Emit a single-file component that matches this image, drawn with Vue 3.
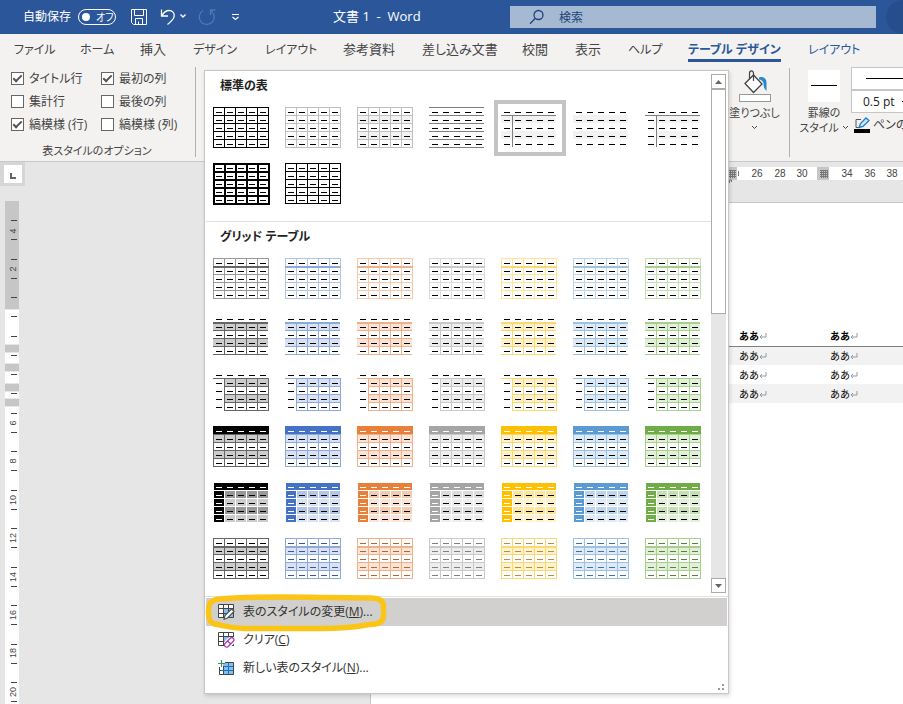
<script setup>
import { ref } from 'vue'

const tabs = ['ファイル', 'ホーム', '挿入', 'デザイン', 'レイアウト', '参考資料', '差し込み文書', '校閲', '表示', 'ヘルプ', 'テーブル デザイン', 'レイアウト']
const activeTab = 10
const isKana = t => /^[\u30a0-\u30ff ]+$/.test(t)

const options = ref([
  { id: 'opt-header', label: 'タイトル行', on: true },
  { id: 'opt-first', label: '最初の列', on: true },
  { id: 'opt-total', label: '集計行', on: false },
  { id: 'opt-last', label: '最後の列', on: false },
  { id: 'opt-rows', label: '縞模様 (行)', on: true },
  { id: 'opt-cols', label: '縞模様 (列)', on: false }
])

/* Thumbnail geometry: five 11px columns by five 8px rows */
const CW = 11
const RH = 8
const box = (x, y, w, h, fill) => ({ x, y, w, h, fill })
const hl = (y, fill, x = 0, w = 56, t = 1) => box(x, y, w, t, fill)
const vl = (x, fill, y = 0, h = 41, t = 1) => box(x, y, t, h, fill)
const range = (a, b) => Array.from({ length: b - a + 1 }, (_, i) => a + i)

function grid(color, t = 1) {
  return [
    ...range(0, 5).map(i => hl(i * RH, color, 0, 55 + t, t)),
    ...range(0, 5).map(i => vl(i * CW, color, 0, 40 + t, t))
  ]
}
function bands(color, x = 0, w = 55) {
  return [box(x, 8, w, 8, color), box(x, 24, w, 8, color)]
}
function dashes(color, pick = () => color) {
  const out = []
  for (let r = 0; r < 5; r++) for (let c = 0; c < 5; c++) out.push(box(c * CW + 3, r * RH + 5, 6, 1, pick(r, c)))
  return out
}

const K = '#000000'
const G = '#bfbfbf'
const M = '#7f7f7f'
const B = '#f2f2f2'
const plain = [
  [...grid(K), ...dashes(K)],
  [...grid(G), ...dashes(K)],
  [...bands(B), ...grid(G), ...dashes(K)],
  [...range(0, 5).map(i => hl(i * RH, M, 0, 55)), ...dashes(K)],
  [...bands(B), hl(8, M, 0, 55), vl(11, M, 8, 32), ...dashes(K)],
  [...bands(B), ...dashes(K)],
  [...bands(B, 11, 44), hl(8, M, 0, 55), vl(11, M, 8, 32), ...dashes(K)],
  [...grid(K, 2), ...dashes(K)],
  [...grid(K), ...dashes(K)]
]

const palette = [
  { light: '#999999', mid: '#666666', band: '#cccccc', deep: '#999999', solid: '#000000', ink: '#000000' },
  { light: '#b4c6e7', mid: '#8eaadb', band: '#d9e2f3', deep: '#b4c6e7', solid: '#4472c4', ink: '#3f5590' },
  { light: '#f7caac', mid: '#f0b08a', band: '#fbe4d5', deep: '#f4cbae', solid: '#e8803a', ink: '#a9693a' },
  { light: '#dbdbdb', mid: '#c9c9c9', band: '#ededed', deep: '#dbdbdb', solid: '#a5a5a5', ink: '#7f7f7f' },
  { light: '#ffe599', mid: '#fad873', band: '#fff2cc', deep: '#ffe599', solid: '#ffc000', ink: '#b2913a' },
  { light: '#bdd6ee', mid: '#9cc2e5', band: '#deeaf6', deep: '#bdd6ee', solid: '#5b9bd5', ink: '#41719c' },
  { light: '#c5e0b3', mid: '#a8d08d', band: '#e2efd9', deep: '#c5e0b3', solid: '#70ad47', ink: '#5d7d45' }
]

const recipes = [
  c => [...grid(c.light), hl(8, c.mid, 0, 56, 2), ...dashes(K)],
  c => [
    ...bands(c.band), hl(8, c.mid, 0, 55, 2),
    ...range(2, 5).map(i => hl(i * RH, c.mid, 0, 55)),
    ...range(1, 4).map(i => vl(i * CW, c.mid, 8, 33)), ...dashes(K)
  ],
  c => [
    ...bands(c.band, 11, 44), hl(8, c.mid),
    ...range(2, 5).map(i => hl(i * RH, c.mid, 11, 45)),
    ...range(1, 5).map(i => vl(i * CW, c.mid, 8, 33)), ...dashes(K)
  ],
  c => [
    ...bands(c.band), ...grid(c.mid), box(0, 0, 56, 8, c.solid),
    ...dashes(K, r => (r === 0 ? '#ffffff' : K))
  ],
  c => {
    const out = [box(1, 1, 54, 7, c.solid)]
    for (let r = 1; r < 5; r++) {
      for (let k = 0; k < 5; k++) {
        out.push(box(k * CW + 1, r * RH + 1, 10, 7, k === 0 ? c.solid : r % 2 ? c.deep : c.band))
      }
    }
    return [...out, ...dashes(K, (r, k) => (r === 0 || k === 0 ? '#ffffff' : K))]
  },
  c => [...bands(c.band), ...grid(c.mid), hl(8, c.mid, 0, 56, 2), ...dashes(c.ink)]
]
const grids = recipes.flatMap(make => palette.map(make))

const sections = [
  { title: '標準の表', items: plain, selected: 4 },
  { title: 'グリッド テーブル', items: grids, selected: -1 }
]

const commands = [
  { icon: 'edit', label: '表のスタイルの変更', key: 'M', tail: ')...', hot: true },
  { icon: 'clear', label: 'クリア', key: 'C', tail: ')', hot: false },
  { icon: 'add', label: '新しい表のスタイル', key: 'N', tail: ')...', hot: false }
]

const rulerBlocks = [
  [0, 108, '#c6c6c6'], [109, 34, '#fff'], [144, 7, '#c6c6c6'], [152, 10, '#fff'], [163, 7, '#c6c6c6'],
  [171, 11, '#fff'], [183, 7, '#c6c6c6'], [191, 6, '#fff'], [198, 7, '#c6c6c6'], [206, 1200, '#fff']
]
const rulerTicks = range(0, 60).map(i => Math.round(19 + i * 19.25))
const rulerNumbers = [[4, 30], [2, 68], ...range(3, 10).map(i => [i * 2, Math.round(222 + (i - 3) * 38.4)])]
const topNumbers = [26, 28, 30, 34, 36, 38].map(n => [n, Math.round(387 + (n - 26) * 11.25)])
const docRows = ['ああ', 'ああ', 'ああ']
</script>

<template>
  <div class="app">
    <header class="titlebar">
      <div class="quick">
        <span id="autosave">自動保存</span>
        <button class="toggle" role="switch" aria-checked="false" aria-labelledby="autosave"><i class="knob"></i>オフ</button>
        <button class="tool save" aria-label="上書き保存">
          <svg width="18" height="18" viewBox="0 0 18 18" fill="none" stroke="#fff">
            <path d="M1.500 1.500h15v15H3.500l-2-2zM4.500 1.500v6h9v-6M5.500 16.500v-6h7v6M8.500 16.500v-3" />
          </svg>
        </button>
        <button class="tool" aria-label="元に戻す">
          <svg width="26" height="18" viewBox="0 0 26 18" fill="none" stroke="#fff" stroke-width="1.300">
            <path d="M1.500 1.500v6.500h6.500M2 7.500C4 4 6 2.500 9 2.500c3.500 0 5.500 2.500 5.200 5.500C14 11 10 14.500 7.500 16.500" />
            <path d="M20.500 6.500l2.500 2.500 2.500-2.500" />
          </svg>
        </button>
        <button class="tool redo" aria-label="繰り返し">
          <svg width="18" height="18" viewBox="0 0 18 18" fill="none" stroke="#5079b3" stroke-width="1.300">
            <path d="M5 2.500A7.500 7.500 0 1 0 12.500 2.500M12.500 7V2h5" />
          </svg>
        </button>
        <button class="tool" aria-label="ツールバーのカスタマイズ">
          <svg width="9" height="8" viewBox="0 0 9 8" fill="none" stroke="#fff" stroke-width="1.200"><path d="M1 1.500h7M1.500 4l3 2.500 3-2.500" /></svg>
        </button>
      </div>
      <div class="doc-title">文書 1&nbsp; -&nbsp; Word</div>
      <label class="search">
        <svg width="16" height="16" viewBox="0 0 16 16" fill="none" stroke="#1f4379" stroke-width="1.300"><circle cx="9.500" cy="6" r="4.500" /><path d="M6.300 9.300L1 14.700" /></svg>
        <input type="text" placeholder="検索" aria-label="検索" />
      </label>
      <div class="account"><i class="avatar"></i></div>
    </header>

    <nav class="tabs">
      <a v-for="(t, i) in tabs" :key="i" href="#" :class="{ active: i === activeTab, context: i > 9, kana: isKana(t) }">{{ t }}</a>
    </nav>

    <section class="ribbon">
      <div class="group options">
        <div class="checks">
          <label v-for="o in options" :key="o.id" :for="o.id"><input :id="o.id" v-model="o.on" type="checkbox" />{{ o.label }}</label>
        </div>
        <div class="caption">表スタイルのオプション</div>
      </div>
      <div class="ribbon-tail">
        <button class="big shading">
          <svg width="32" height="32" viewBox="0 0 32 32" fill="none">
            <path d="M6 13.500L14.500 5l8.500 9-8.500 8.500z" fill="#fff" stroke="#444" stroke-width="1.300" />
            <path d="M14.500 11V3.500c0-3.500-4-3.500-4 0v5.500" stroke="#444" stroke-width="1.200" />
            <path d="M20 7.500c4-1.500 7.500 1 7.500 5V21c-2.500-2-3-5-3-8-1-2-2.500-3.500-4.500-3.500z" fill="#2b88c8" />
            <rect x=".5" y="24.500" width="31" height="7" fill="#fff" stroke="#999" />
          </svg>
          <span>塗りつぶし</span>
          <svg class="chev" width="7" height="5" viewBox="0 0 7 5" fill="none" stroke="#444"><path d="M1 1l2.500 2.500L6 1" /></svg>
        </button>
        <button class="big border-style">
          <svg width="32" height="32" viewBox="0 0 32 32"><rect width="32" height="32" fill="#fff" /><rect x="3" y="15" width="26" height="1" fill="#000" /></svg>
          <span>罫線の</span>
          <span class="with-chev">スタイル<svg width="7" height="5" viewBox="0 0 7 5" fill="none" stroke="#444"><path d="M1 1l2.500 2.500L6 1" /></svg></span>
        </button>
        <div class="pen">
          <button class="field" aria-label="ペンのスタイル"><i class="stroke"></i></button>
          <div class="field">
            <select aria-label="ペンの太さ"><option>0.5 pt</option></select>
            <i class="stroke"></i>
          </div>
          <button class="pen-color">
            <svg width="17" height="17" viewBox="0 0 17 17" fill="none">
              <path d="M7 2.500H2v8h3" stroke="#555" />
              <path d="M5 10.500l1.500-4L12 1l3 2.500-6 6z" fill="#cfe6f7" stroke="#1f7fc9" stroke-width="1.300" />
              <rect x="0" y="12" width="16" height="4" fill="#000" />
            </svg>
            ペンの色
          </button>
        </div>
      </div>
    </section>

    <main class="workspace">
      <aside class="side">
        <button class="tab-stop" aria-label="左揃えタブ"><svg width="17" height="17" viewBox="0 0 17 17"><path d="M5 7h2v4h4v2H5z" fill="#666" /></svg></button>
        <svg class="ruler-v" width="14" height="100%">
          <rect v-for="(b, i) in rulerBlocks" :key="'b' + i" x="0" :y="b[0]" width="14" :height="b[1]" :fill="b[2]" />
          <rect v-for="y in rulerTicks" :key="'t' + y" x="6" :y="y" width="6" height="1" fill="#444" />
          <text v-for="n in rulerNumbers" :key="'n' + n[1]" :transform="`translate(11 ${n[1]}) rotate(-90)`" text-anchor="middle" font-size="9" fill="#444">{{ n[0] }}</text>
        </svg>
      </aside>
      <div class="canvas">
        <svg class="ruler-h" width="100%" height="16">
          <rect x="0" y="0" width="100%" height="13" fill="#fff" />
          <text v-for="n in topNumbers" :key="n[0]" :x="n[1]" y="10" text-anchor="middle" font-size="10" fill="#444">{{ n[0] }}</text>
          <rect x="357" y="0" width="10" height="13" fill="#c6c6c6" />
          <path d="M359 3.500h7M359 5.500h7M359 7.500h7M359 9.500h7M360.500 3v8M362.500 3v8M364.500 3v8M368.500 4v5" stroke="#777" />
          <rect x="447" y="0" width="12" height="13" fill="#c6c6c6" />
          <path d="M450 3.500h8M450 5.500h8M450 7.500h8M450 9.500h8M451.500 3v8M453.500 3v8M455.500 3v8M457.500 3v8" stroke="#777" />
          <path d="M359.500 16v-3h2v2" stroke="#777" fill="none" />
        </svg>
        <article class="page">
          <table class="doc-table">
            <thead>
              <tr>
                <th v-for="c in 2" :key="c">ああ<svg width="8" height="7" viewBox="0 0 8 7" fill="none" stroke="#999"><path d="M7 0v4H1M3 2L1 4l2 2" /></svg></th>
              </tr>
            </thead>
            <tbody>
              <tr v-for="(r, i) in docRows" :key="i">
                <td v-for="c in 2" :key="c">{{ r }}<svg width="8" height="7" viewBox="0 0 8 7" fill="none" stroke="#999"><path d="M7 0v4H1M3 2L1 4l2 2" /></svg></td>
              </tr>
            </tbody>
          </table>
        </article>
      </div>
    </main>

    <div class="popup">
      <div class="gallery">
        <div class="gallery-body">
          <section v-for="s in sections" :key="s.title" class="gallery-section">
            <h3>{{ s.title }}</h3>
            <div class="thumbs">
              <button v-for="(it, i) in s.items" :key="i" class="thumb" :class="{ selected: i === s.selected }" :aria-label="s.title + ' ' + (i + 1)">
                <svg width="58" height="42" viewBox="0 0 58 42" shape-rendering="crispEdges">
                  <rect v-for="(q, k) in it" :key="k" :x="q.x" :y="q.y" :width="q.w" :height="q.h" :fill="q.fill" />
                </svg>
              </button>
            </div>
          </section>
        </div>
        <div class="scrollbar">
          <button aria-label="上へ"><svg width="7" height="4" viewBox="0 0 7 4"><path d="M0 4L3.500 0 7 4z" fill="#666" /></svg></button>
          <div class="track"><div class="grip"></div></div>
          <button aria-label="下へ"><svg width="7" height="4" viewBox="0 0 7 4"><path d="M0 0L3.500 4 7 0z" fill="#666" /></svg></button>
        </div>
      </div>
      <div class="commands">
        <button v-for="c in commands" :key="c.key" class="command" :class="{ hot: c.hot }">
          <svg width="17" height="16" viewBox="0 0 17 16" fill="none">
            <template v-if="c.icon === 'add'">
              <rect x="5" y="3" width="11" height="12" fill="#83beec" />
              <path d="M7 2.500h8.500v12H1.500V7M5.500 6v8.500" stroke="#444" />
              <path d="M1.500 10.500h14M6 6.500h9.500M10.500 3v11.500" stroke="#1e6fb8" />
              <path d="M3.500 0v7M0 3.500h7" stroke="#3f8f5f" stroke-width="1.200" />
            </template>
            <template v-else>
              <rect x="1" y="1" width="15" height="13" fill="#fff" />
              <rect x="6" y="5" width="10" height="9" fill="#83beec" />
              <path d="M.5.5h15v13H.5zM.5 4.500h15M.5 9.500h15M5.500.5v13M10.500.5v13" stroke="#444" />
              <path v-if="c.icon === 'edit'" d="M6 15.300l1-3.800L13.500 5l2.500 2.300-6.500 6.700z" fill="#fff" stroke="#555" stroke-width="1.200" />
              <template v-else>
                <path d="M6 15.500V10l5-5h5.500v6L12 15.500z" fill="#fff" />
                <path d="M7 11.500l5.500-5.500c1.800-1.400 4.500 1 3 3L10 14.700c-2.200 1.400-4.600-1.200-3-3.200zM9.500 9l3.200 3" fill="#fff" stroke="#a33db5" stroke-width="1.300" />
              </template>
            </template>
          </svg>
          <span>{{ c.label }}(<u>{{ c.key }}</u>{{ c.tail }}</span>
        </button>
        <svg class="marker" width="182" height="38" viewBox="0 0 182 38" fill="none" stroke="#fbc518" stroke-width="5.500" stroke-linejoin="round">
          <path d="M14 5C45 2 90 3 120 3.500l45 .5c8 0 13.500 2 13.500 8v10c0 6-5 8.500-14 8.500-10 2-24 4-50 4H40C28 34 20 32 12 30.500c-7-1-8.500-5-8.500-11.500C3.500 11 4 6.500 14 5z" />
        </svg>
      </div>
      <svg class="resize" width="6" height="6" viewBox="0 0 6 6" fill="#999"><path d="M4 0h2v2H4zM4 4h2v2H4zM0 4h2v2H0z" /></svg>
    </div>
  </div>
</template>

<style>
body { margin: 0; }
</style>

<style scoped>
.app {
  position: relative;
  display: flex;
  flex-direction: column;
  height: 100vh;
  min-height: 700px;
  overflow: hidden;
  background: #e6e6e6;
  color: #444;
  font: 12px/16px "Open Sans", "Noto Sans CJK JP", sans-serif;
  font-feature-settings: "palt";
}
*, *::before, *::after { box-sizing: border-box; }
button, input, select { font: inherit; color: inherit; font-feature-settings: inherit; }
button { margin: 0; padding: 0; border: 0; background: none; }
svg { flex: none; }

.titlebar { display: flex; align-items: center; flex: none; height: 34px; background: #2b579a; color: #fff; }
.quick { display: flex; align-items: center; flex: none; width: 333px; padding-left: 23px; }
.toggle { display: flex; align-items: center; gap: 6px; width: 38px; height: 16px; margin: 0 14px 0 7px; padding-left: 3px; border: 1px solid #fff; border-radius: 8px; font-size: 10px; line-height: 14px; }
.knob { width: 8px; height: 8px; border-radius: 4px; background: #fff; }
.tool { display: flex; margin-right: 12px; }
.tool.redo { margin-right: 15px; }
.doc-title { flex: none; width: 177px; padding-bottom: 2px; font-size: 13px; }
.search { display: flex; align-items: center; gap: 14px; flex: 1; min-width: 0; height: 22px; padding-left: 19px; background: #a5b9d3; }
.search input { flex: 1; min-width: 0; height: 20px; padding: 0; border: 0; outline: 0; background: transparent; }
.search input::placeholder { color: #1f4379; opacity: 1; }
.account { display: flex; flex: none; width: 27px; height: 34px; padding-left: 10px; overflow: hidden; }
.avatar { flex: none; width: 34px; height: 34px; border-radius: 17px; background: #264e8c; }

.tabs {
  display: grid;
  grid-template-columns: 66px 60px 53px 72px 78px 79px 100px 53px 53px 60px 120px 1fr;
  justify-items: start;
  align-items: baseline;
  flex: none;
  height: 32px;
  padding: 5px 0 0 14px;
  background: #f3f2f1;
  font-size: 13px;
  line-height: 20px;
  white-space: nowrap;
}
.tabs a { height: 22px; color: #444; text-decoration: none; }
.tabs .kana { font-size: 12px; }
.tabs .context { color: #2b579a; }
.tabs .active { border-bottom: 3px solid #2b579a; font-weight: bold; }

.ribbon { display: flex; justify-content: space-between; flex: none; height: 96px; background: #f3f2f1; border-bottom: 1px solid #c8c8c8; }
.options { display: flex; flex-direction: column; justify-content: space-between; width: 196px; margin: 1px 0 4px; padding-left: 11px; border-right: 1px solid #b3b0ad; }
.checks { display: grid; grid-template-columns: 90px 1fr; grid-auto-rows: 23px; white-space: nowrap; }
.checks label { display: flex; align-items: center; gap: 5px; }
.checks input { appearance: none; display: grid; place-items: center; flex: none; width: 13px; height: 13px; margin: 0; border: 1px solid #666; background: #fff; }
.checks input:checked::before { content: ""; width: 9px; height: 5px; margin-bottom: 3px; border: solid #555; border-width: 0 0 2px 2px; transform: rotate(-45deg); }
.caption { padding-right: 12px; text-align: center; font-size: 11px; line-height: 12px; }
.ribbon-tail { display: flex; flex: none; width: 174px; overflow: hidden; white-space: nowrap; }
.big { display: flex; flex-direction: column; align-items: center; flex: none; font-size: 11px; line-height: 15px; }
.shading { width: 61px; margin: 2px 0 4px; padding: 2px 9px 0 0; border-right: 1px solid #b3b0ad; }
.shading > svg { margin-bottom: 3px; }
.shading .chev { margin: 5px 0 0; }
.border-style { width: 61px; padding: 4px 0 0 7px; }
.border-style > svg { margin-bottom: 3px; }
.with-chev { display: flex; align-items: center; gap: 3px; }
.pen { flex: none; width: 96px; padding-top: 1px; }
.field { display: flex; align-items: center; gap: 4px; width: 96px; height: 23px; padding-left: 11px; border: 1px solid #c6c6c6; background: #fff; color: #222; }
.field .stroke { flex: 1; height: 1px; margin-left: 3px; background: #000; }
.field select { appearance: none; width: 32px; padding: 0; border: 0; background: #fff; }
.pen-color { display: flex; align-items: center; gap: 2px; height: 22px; margin: 1px 0 0 3px; }

.workspace { display: flex; flex: 1; min-height: 0; background: #e6e6e6; }
.workspace text { font-family: "Liberation Sans", sans-serif; }
.side { display: flex; flex-direction: column; flex: none; width: 370px; }
.tab-stop { display: grid; place-items: center; flex: none; width: 25px; height: 24px; margin-bottom: 15px; border: 3px solid #d6d6d6; border-left-width: 4px; background: #fff; }
.ruler-v { flex: 1 1 0; min-height: 0; margin-left: 5px; }
.canvas { display: flex; flex-direction: column; flex: 1; min-width: 0; padding-top: 5px; }
.ruler-h { margin-bottom: 19px; }
.page { flex: 1; padding: 124px 0 0 358px; border-top: 1px solid #c6c6c6; border-left: 1px solid #c6c6c6; background: #fff; }
.doc-table { width: 100%; border-collapse: collapse; table-layout: fixed; color: #000; font-size: 10px; line-height: 18px; font-feature-settings: normal; }
.doc-table th, .doc-table td { height: 19px; padding: 0 0 0 10px; text-align: left; }
.doc-table th:first-child { width: 91px; }
.doc-table th { border-bottom: 1px solid #7f7f7f; }
.doc-table tbody tr:nth-child(odd) { background: #f2f2f2; }

.popup { position: absolute; left: 204px; top: 70px; width: 525px; border: 1px solid #c6c6c6; background: #fff; box-shadow: 1px 2px 4px rgba(0, 0, 0, .15); }
.gallery { display: flex; padding: 3px 2px 3px 1px; border-bottom: 1px solid #e1e1e1; }
.gallery-body { flex: 1; padding-bottom: 6px; }
.gallery-section h3 { margin: 0; padding-left: 14px; color: #222; font-size: 12px; line-height: 23px; height: 26px; font-weight: bold; }
.gallery-section + .gallery-section { border-top: 1px solid #e1e1e1; }
.gallery-section + .gallery-section h3 { height: 29px; line-height: 29px; }
.gallery-section:first-child .thumbs { padding-bottom: 9px; }
.thumbs { display: grid; grid-template-columns: repeat(7, 72px); grid-auto-rows: 56px; }
.thumb { display: flex; padding: 7px; }
.thumb.selected { padding: 3px; border: 4px solid #c4c4c4; }
.scrollbar { display: flex; flex-direction: column; flex: none; width: 15px; background: #e6e6e6; }
.scrollbar button { display: grid; place-items: center; flex: none; height: 15px; border: 1px solid #ababab; background: #fff; }
.track { flex: 1; }
.grip { height: 46%; border: 1px solid #ababab; background: #fff; }
.commands { position: relative; padding: 1px 1px 11px; }
.command { display: flex; align-items: center; gap: 8px; width: 100%; height: 28px; padding-left: 12px; color: #333; font-size: 12px; text-align: left; }
.command.hot { background: #d2d0ce; }
.marker { position: absolute; left: 0; top: -3px; }
.resize { position: absolute; right: 4px; bottom: 3px; }
</style>
